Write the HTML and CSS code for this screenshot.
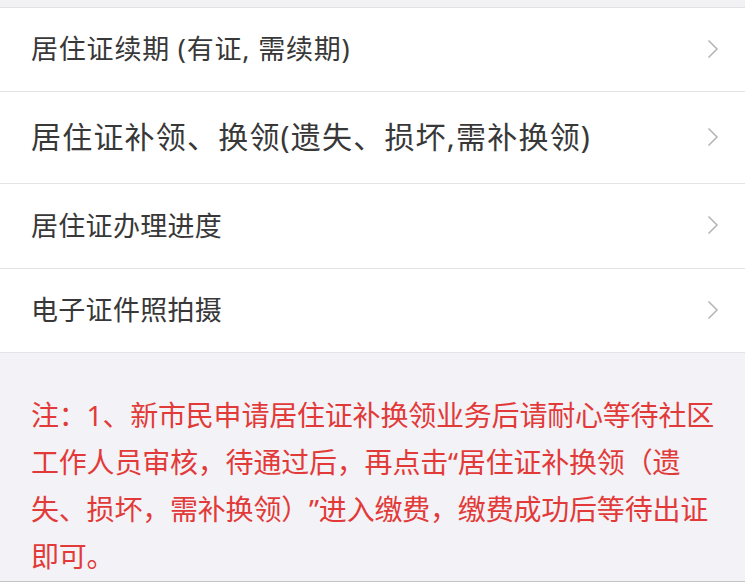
FILE: index.html
```html
<!DOCTYPE html>
<html lang="zh-CN">
<head>
<meta charset="utf-8">
<link rel="stylesheet" href="styles.css">
</head>
<body>
<div class="top"></div>
<ul class="list">
  <li class="row r1"><span class="label">居住证续期 (有证, 需续期)</span><svg class="chev" viewBox="0 0 12 20"><path d="M1.5 1.5 L10 10 L1.5 18.5"/></svg></li>
  <li class="row r2"><span class="label big">居住证补领、换领(遗失、损坏,需补换领)</span><svg class="chev" viewBox="0 0 12 20"><path d="M1.5 1.5 L10 10 L1.5 18.5"/></svg></li>
  <li class="row r3"><span class="label">居住证办理进度</span><svg class="chev" viewBox="0 0 12 20"><path d="M1.5 1.5 L10 10 L1.5 18.5"/></svg></li>
  <li class="row r4"><span class="label">电子证件照拍摄</span><svg class="chev" viewBox="0 0 12 20"><path d="M1.5 1.5 L10 10 L1.5 18.5"/></svg></li>
</ul>
<div class="note">注：1、新市民申请居住证补换领业务后请耐心等待社区<br>工作人员审核，待通过后，再点击“居住证补换领（遗<br>失、损坏，需补换领）”进入缴费，缴费成功后等待出证<br>即可。</div>
</body>
</html>
```
FILE: styles.css
```css
html, body {
  margin: 0;
  padding: 0;
}
body {
  width: 745px;
  height: 582px;
  overflow: hidden;
  background: #f3f2f7;
  font-family: "Noto Sans", "Noto Sans CJK SC", sans-serif;
  text-spacing-trim: space-all;
}
.top {
  height: 7px;
  background: #f2f2f4;
  border-bottom: 1px solid #e2e2e4;
}
.list {
  list-style: none;
  margin: 0;
  padding: 0;
  background: #fff;
}
.row {
  display: flex;
  align-items: center;
  justify-content: space-between;
  padding: 0 26px 2px 31px;
  border-bottom: 1px solid #e4e4e6;
  box-sizing: border-box;
}
.r1 { height: 84px; }
.r2 { height: 92px; }
.r3 { height: 85px; }
.r4 { height: 84px; }
.label {
  font-size: 27px;
  color: #383838;
  line-height: 1;
  letter-spacing: 0.3px;
}
.r1 .label {
  letter-spacing: 0.8px;
}
.label.big {
  font-size: 30px;
  letter-spacing: 1.2px;
}
.chev {
  width: 12px;
  height: 20px;
  fill: none;
  stroke: #b4b4b4;
  stroke-width: 1.5;
}
.note {
  padding: 39px 0 0 31px;
  height: 189px;
  font-size: 28px;
  line-height: 47px;
  letter-spacing: -0.2px;
  color: #e23a38;
  white-space: nowrap;
  border-bottom: 3px solid #c4c4c6;
}
```
